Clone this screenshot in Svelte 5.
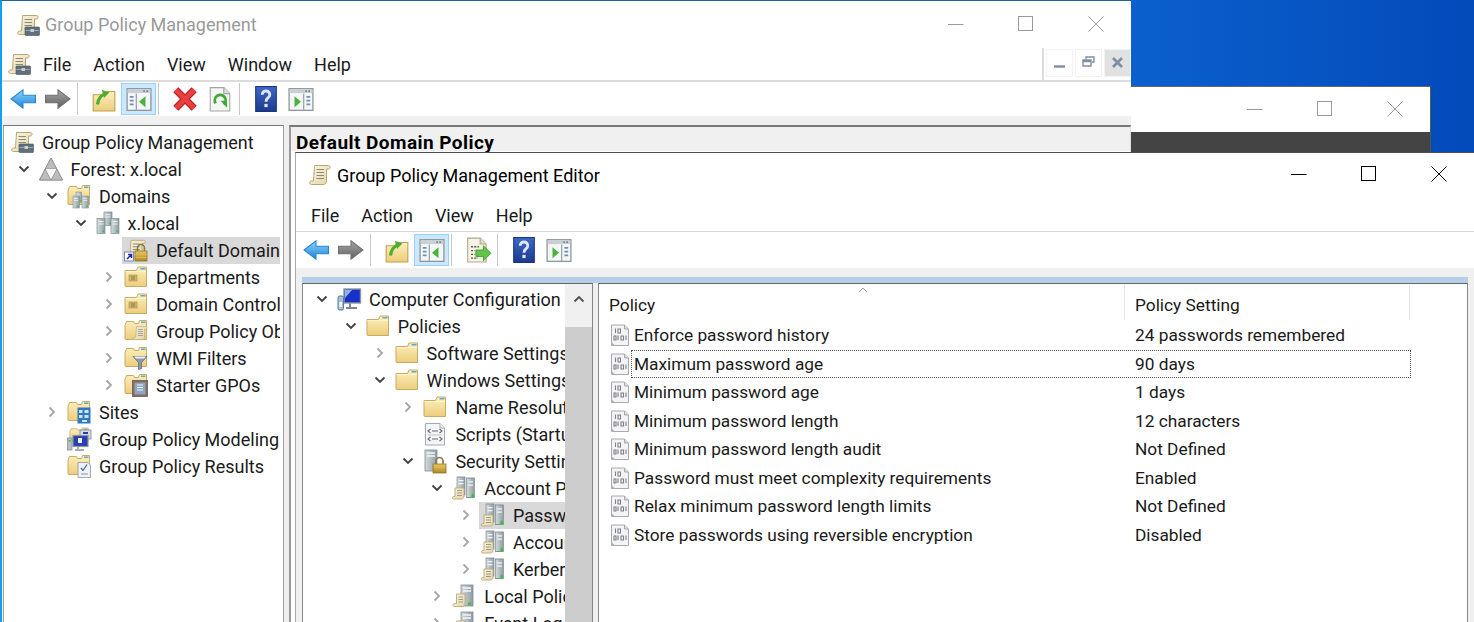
<script>
  const leftTree = [
    { t: 'Group Policy Management', d: 0, ic: 'toolscroll' },
    { t: 'Forest: x.local', d: 1, ic: 'forest', ch: 'open' },
    { t: 'Domains', d: 2, ic: 'domains', ch: 'open' },
    { t: 'x.local', d: 3, ic: 'domain', ch: 'open' },
    { t: 'Default Domain Policy', d: 4, ic: 'gpolink', sel: true },
    { t: 'Departments', d: 4, ic: 'ou', ch: 'closed' },
    { t: 'Domain Controllers', d: 4, ic: 'ou', ch: 'closed' },
    { t: 'Group Policy Objects', d: 4, ic: 'gpofolder', ch: 'closed' },
    { t: 'WMI Filters', d: 4, ic: 'wmi', ch: 'closed' },
    { t: 'Starter GPOs', d: 4, ic: 'starter', ch: 'closed' },
    { t: 'Sites', d: 2, ic: 'sites', ch: 'closed' },
    { t: 'Group Policy Modeling', d: 2, ic: 'modeling' },
    { t: 'Group Policy Results', d: 2, ic: 'results' }
  ];
  const editorTree = [
    { t: 'Computer Configuration', d: 0, ic: 'computer', ch: 'open' },
    { t: 'Policies', d: 1, ic: 'folder', ch: 'open' },
    { t: 'Software Settings', d: 2, ic: 'folder', ch: 'closed' },
    { t: 'Windows Settings', d: 2, ic: 'folder', ch: 'open' },
    { t: 'Name Resolution Policy', d: 3, ic: 'folder', ch: 'closed' },
    { t: 'Scripts (Startup/Shutdown)', d: 3, ic: 'scripts' },
    { t: 'Security Settings', d: 3, ic: 'security', ch: 'open' },
    { t: 'Account Policies', d: 4, ic: 'polserver', ch: 'open' },
    { t: 'Password Policy', d: 5, ic: 'polserver', ch: 'closed', sel: true },
    { t: 'Account Lockout Policy', d: 5, ic: 'polserver', ch: 'closed' },
    { t: 'Kerberos Policy', d: 5, ic: 'polserver', ch: 'closed' },
    { t: 'Local Policies', d: 4, ic: 'polserver2', ch: 'closed' },
    { t: 'Event Log', d: 4, ic: 'polserver2', ch: 'closed' }
  ];
  const policies = [
    ['Enforce password history', '24 passwords remembered'],
    ['Maximum password age', '90 days'],
    ['Minimum password age', '1 days'],
    ['Minimum password length', '12 characters'],
    ['Minimum password length audit', 'Not Defined'],
    ['Password must meet complexity requirements', 'Enabled'],
    ['Relax minimum password length limits', 'Not Defined'],
    ['Store passwords using reversible encryption', 'Disabled']
  ];
</script>

{#snippet icon(name, cls = 'ic')}
  <svg class={cls} viewBox="0 0 24 24" aria-hidden="true"><use href={'#i-' + name} /></svg>
{/snippet}

{#snippet winctl()}
  <div class="ctl">
    <span class="cb"><svg viewBox="0 0 16 16"><path d="M0 8.5H15.5" /></svg></span>
    <span class="cb"><svg viewBox="0 0 16 16"><rect x="0.5" y="0.5" width="14" height="14" /></svg></span>
    <span class="cb"><svg viewBox="0 0 16 16"><path d="M0.5 0.5L15.5 15.5M15.5 0.5L0.5 15.5" /></svg></span>
  </div>
{/snippet}

{#snippet tree(rows, base, step)}
  {#each rows as r}
    <div class="row">
      <div class="item" class:sel={r.sel} style="margin-left:{base + step * r.d}px">
        {#if r.ch}
          <svg class="chev" viewBox="0 0 16 16">
            {#if r.ch === 'open'}<path class="open" d="M3.5 5.5L8 10L12.5 5.5" />{:else}<path d="M5.5 3.5L10 8L5.5 12.5" />{/if}
          </svg>
        {/if}
        {@render icon(r.ic)}
        <span class="lbl">{r.t}</span>
      </div>
    </div>
  {/each}
{/snippet}

<svg class="defs" aria-hidden="true">
  <defs>
    <linearGradient id="gFolder" x1="0" y1="0" x2="0" y2="1"><stop offset="0" stop-color="#fdf0bd" /><stop offset="1" stop-color="#eccd7c" /></linearGradient>
    <linearGradient id="gPaper" x1="0" y1="0" x2="1" y2="1"><stop offset="0" stop-color="#fbf6e2" /><stop offset="1" stop-color="#e3d5a8" /></linearGradient>
    <linearGradient id="gBlue" x1="0" y1="0" x2="0" y2="1"><stop offset="0" stop-color="#8fd8ff" /><stop offset="1" stop-color="#1d80d6" /></linearGradient>
    <linearGradient id="gGrey" x1="0" y1="0" x2="0" y2="1"><stop offset="0" stop-color="#a8a8a8" /><stop offset="1" stop-color="#5f5f5f" /></linearGradient>
    <linearGradient id="gHelp" x1="0" y1="0" x2="0" y2="1"><stop offset="0" stop-color="#3d68c8" /><stop offset="1" stop-color="#1c3a8c" /></linearGradient>
    <linearGradient id="gSrv" x1="0" y1="0" x2="1" y2="0"><stop offset="0" stop-color="#d5dbdd" /><stop offset="1" stop-color="#8e9ca3" /></linearGradient>
    <linearGradient id="gGold" x1="0" y1="0" x2="0" y2="1"><stop offset="0" stop-color="#e8c860" /><stop offset="1" stop-color="#b08a28" /></linearGradient>

    <g id="i-folderback">
      <path d="M1 6.5L2.5 2.5H9.5L10.5 4.5H14.5L15.5 1.5H22.5V20.5H2A1 1 0 0 1 1 19.5Z" fill="url(#gFolder)" stroke="#c9ab64" />
      <rect x="17" y="2.5" width="4.5" height="1.5" fill="#5aa8dc" />
    </g>
    <g id="i-folder">
      <path d="M1 5.5H12.5L14 2H22.5V21.5H2A1 1 0 0 1 1 20.5Z" fill="url(#gFolder)" stroke="#c9ab64" />
      <path d="M1.5 6.5H22" stroke="#fff6d0" />
      <rect x="16.5" y="3" width="5" height="1.5" fill="#5aa8dc" />
    </g>
    <g id="i-ou">
      <use href="#i-folder" />
      <rect x="5" y="10" width="8" height="6" fill="#cdb26a" stroke="#a78d45" stroke-width="0.6" />
      <path d="M7 12H11M7 14H11" stroke="#7f6f3a" stroke-width="0.8" />
    </g>
    <g id="i-scroll">
      <path d="M6.5 2.5H20.5C22.7 2.5 22.7 6 20.5 6H18.5V18C18.5 20.5 17 21.5 15.5 21.5H3.5C1 21.5 1 18 3.5 18H5.5Z" fill="url(#gPaper)" stroke="#b9a777" />
      <path d="M8.5 6.5H16M8.5 9.5H16M8.5 12.5H16M8.5 15.5H16" stroke="#8c8a78" stroke-width="1.1" />
    </g>
    <g id="i-toolscroll">
      <use href="#i-scroll" />
      <rect x="9" y="14" width="14.5" height="8.5" rx="0.8" fill="#5f6f7b" stroke="#46525c" stroke-width="0.6" />
      <path d="M9.5 17.5H23" stroke="#9aa6ae" /><rect x="14.5" y="16" width="3.5" height="3" fill="#c7ced2" />
    </g>
    <g id="i-forest">
      <path d="M12 1L23.5 23H0.5Z" fill="#e4e4e4" stroke="#9b9b9b" />
      <path d="M12 1L17.8 12H6.2ZM6.2 12L12 23L0.5 23ZM17.8 12L23.5 23H12Z" fill="#bcbcbc" stroke="#8b8b8b" stroke-width="0.8" />
      <path d="M6.8 12H17.2L12 22Z" fill="#f7f7f7" />
    </g>
    <g id="i-tower">
      <rect x="0" y="0" width="8" height="15" fill="url(#gSrv)" stroke="#7f8c92" stroke-width="0.7" />
      <path d="M1.5 3H6.5M1.5 5.5H6.5" stroke="#f2f4f5" />
      <rect x="5.3" y="12" width="1.7" height="1.7" fill="#37c337" />
    </g>
    <g id="i-domain">
      <use href="#i-tower" transform="translate(8 1) scale(1 .9)" />
      <use href="#i-tower" transform="translate(1 7.5)" />
      <use href="#i-tower" transform="translate(15 7.5)" />
    </g>
    <g id="i-domains">
      <use href="#i-folderback" />
      <use href="#i-tower" transform="translate(9 8) scale(.7)" />
      <use href="#i-tower" transform="translate(15 12) scale(.8)" />
      <use href="#i-tower" transform="translate(6 12) scale(.8)" />
    </g>
    <g id="i-gpolink">
      <use href="#i-scroll" transform="translate(1 0) scale(.92)" />
      <rect x="11" y="13" width="12" height="10" fill="url(#gGold)" stroke="#86691c" stroke-width="0.7" />
      <path d="M13.5 13V10A3.5 3.5 0 0 1 20.5 10V13" fill="none" stroke="#8c7a45" stroke-width="1.6" />
      <path d="M11.5 16.5H22.5M11.5 19.5H22.5" stroke="#d8b84f" />
      <rect x="0.5" y="14" width="9" height="9" fill="#fff" stroke="#6a6a9a" stroke-width="0.8" />
      <path d="M3 21L7 17M4 16.5H7.5V20" fill="none" stroke="#2a2aa8" stroke-width="1.6" />
    </g>
    <g id="i-gpofolder">
      <use href="#i-folderback" />
      <use href="#i-scroll" transform="translate(8 6) scale(.68)" />
    </g>
    <g id="i-wmi">
      <use href="#i-folderback" />
      <path d="M9 10.5H23L17.5 16.5V22.5L14.5 23.5V16.5Z" fill="#8b9ba8" stroke="#5d6d7a" stroke-width="0.8" />
      <path d="M10 10.5H22L20 12.5H12Z" fill="#eef2f4" />
    </g>
    <g id="i-starter">
      <use href="#i-folderback" />
      <rect x="8.5" y="7.5" width="15" height="16" fill="#8c6a5a" stroke="#6b5a55" stroke-width="0.8" />
      <rect x="10.5" y="9.5" width="11" height="12" fill="#8aa6c4" />
      <path d="M13 12H19M13 14.5H19M13 17H19" stroke="#f4f7fa" stroke-width="1.2" />
    </g>
    <g id="i-sites">
      <use href="#i-folderback" />
      <rect x="10.5" y="7.5" width="13" height="16" fill="#2e78c4" />
      <path d="M12 10H15.5V13H12ZM17.5 10H21.5V13H17.5ZM12 15H15.5V18H12ZM17.5 15H21.5V18H17.5Z" fill="#cfe3f5" />
      <rect x="15" y="20" width="5" height="2" fill="#cfe3f5" />
    </g>
    <g id="i-modeling">
      <use href="#i-folderback" transform="translate(2 0) scale(.85 .7)" />
      <rect x="13" y="3" width="11" height="9" fill="#d8dde2" stroke="#7a8690" stroke-width="0.8" />
      <path d="M16 6H21" stroke="#2640a8" stroke-width="2" />
      <rect x="6" y="8.5" width="15" height="11" fill="#2a40b0" stroke="#8a96a0" stroke-width="1.2" />
      <rect x="11" y="11" width="4" height="5" fill="#f0f0f0" />
      <rect x="0.5" y="11" width="4.5" height="12" fill="#b8c0c6" stroke="#7a8690" stroke-width="0.7" />
      <rect x="1.7" y="13" width="2" height="1.6" fill="#37c337" />
      <path d="M11 20V22M8 23H17" stroke="#8a96a0" stroke-width="1.5" />
    </g>
    <g id="i-results">
      <use href="#i-folderback" />
      <path d="M11 8.5H21L23.5 11V23.5H11Z" fill="#eef1f5" stroke="#8c96a0" stroke-width="0.8" />
      <path d="M14 14L16 16.5L20 10.5" fill="none" stroke="#3e6fa8" stroke-width="1.3" />
      <path d="M14 20H21" stroke="#8c96a0" />
    </g>
    <g id="i-computer">
      <rect x="7" y="2" width="16.5" height="14" fill="#1830c8" stroke="#8a96a0" stroke-width="1.4" />
      <path d="M8 3H15L8 11Z" fill="#8ab4f0" />
      <path d="M13 16.5V20M9 21H20" stroke="#7a8690" stroke-width="2" />
      <rect x="1" y="9" width="5.5" height="14" rx="1.5" fill="#a8c0d4" stroke="#4a7298" stroke-width="0.9" />
      <rect x="2.5" y="15" width="2.5" height="5" fill="#fff" />
    </g>
    <g id="i-scripts">
      <path d="M2.5 1.5H17L21.5 6V23H2.5Z" fill="#f4f5f7" stroke="#a8a8b0" />
      <path d="M17 1.5V6H21.5" fill="#fff" stroke="#a8a8b0" />
      <path d="M7.5 7L5 9L7.5 11M16.5 7L19 9L16.5 11M7.5 15L5 17L7.5 19M16.5 15L19 17L16.5 19M9 9H15M9 17H15" fill="none" stroke="#6a6a70" stroke-width="1.1" />
      <path d="M5 13H19" stroke="#c5c5ca" />
    </g>
    <g id="i-security">
      <rect x="2" y="1" width="12" height="21" fill="url(#gSrv)" stroke="#7f8c92" stroke-width="0.8" />
      <path d="M4 4H12M4 7H12" stroke="#f5f6f7" stroke-width="1.4" />
      <rect x="10" y="15" width="13" height="9" fill="url(#gGold)" stroke="#86691c" stroke-width="0.7" />
      <path d="M13 15V12A3.5 3.5 0 0 1 20 12V15" fill="none" stroke="#8c7a45" stroke-width="1.7" />
      <path d="M11 18.5H22" stroke="#d8b84f" />
    </g>
    <g id="i-polserver">
      <use href="#i-tower" transform="translate(5 1) scale(1 1.2)" />
      <use href="#i-tower" transform="translate(14.5 2) scale(1 1.3)" />
      <path d="M3 12H12V20C12 22 11 23 9.5 23H1.5C0 23 0 20.5 1.5 20.5H3Z" fill="url(#gPaper)" stroke="#b9a777" stroke-width="0.9" />
      <path d="M5 14.5H10M5 17H10M5 19.5H10" stroke="#9c9a88" />
      <rect x="19.5" y="19" width="2.5" height="2.5" fill="#37c337" />
    </g>
    <g id="i-polserver2">
      <rect x="9" y="1" width="12" height="21" fill="url(#gSrv)" stroke="#7f8c92" stroke-width="0.8" />
      <path d="M11 4H19M11 7H19" stroke="#f5f6f7" stroke-width="1.4" />
      <rect x="16" y="18.5" width="2.8" height="2.8" fill="#37c337" />
      <path d="M4.5 10H13V19C13 21.5 12 22.5 10.5 22.5H2.5C0.5 22.5 0.5 19.5 2.5 19.5H4.5Z" fill="url(#gPaper)" stroke="#b9a777" stroke-width="0.9" />
      <path d="M6.5 13H11M6.5 15.5H11M6.5 18H11" stroke="#9c9a88" />
    </g>

    <g id="i-back">
      <path d="M1 12L12 3.5V8.5H23.5V15.5H12V20.5Z" fill="url(#gBlue)" stroke="#2a86d0" />
    </g>
    <g id="i-forward">
      <path d="M23 12L12 3.5V8.5H0.5V15.5H12V20.5Z" fill="url(#gGrey)" stroke="#6f6f6f" />
    </g>
    <g id="i-up">
      <path d="M2 8H11L13 5H22V23H2Z" fill="url(#gFolder)" stroke="#c2a050" />
      <path d="M6 17C7 11 9 9 13 7" fill="none" stroke="#4fae2d" stroke-width="3" />
      <path d="M10 3.5L17 6L12 11Z" fill="#4fae2d" />
    </g>
    <g id="i-paneframe">
      <rect x="1" y="2.5" width="22" height="20" fill="#f4f6f7" stroke="#8c969c" stroke-width="1.2" />
      <rect x="1.5" y="3" width="21" height="3.5" fill="#c9d0d4" />
      <path d="M16 4.7H17.5M18.8 4.7H20.3" stroke="#5d666c" />
    </g>
    <g id="i-paneleft">
      <use href="#i-paneframe" />
      <rect x="9" y="7" width="1" height="15" fill="#8c969c" />
      <path d="M3.5 10H7M3.5 13.5H7M3.5 17H7" stroke="#6f8fb8" stroke-width="1.6" />
      <path d="M18 9.5V19.5L12 14.5Z" fill="#49b43c" />
    </g>
    <g id="i-paneright">
      <use href="#i-paneframe" />
      <rect x="14" y="7" width="1" height="15" fill="#8c969c" />
      <path d="M17 10H20.5M17 13.5H20.5M17 17H20.5" stroke="#6f8fb8" stroke-width="1.6" />
      <path d="M6 9.5V19.5L12 14.5Z" fill="#49b43c" />
    </g>
    <g id="i-x">
      <path d="M3.5 3.5L20.5 20.5M20.5 3.5L3.5 20.5" stroke="#b81818" stroke-width="6.5" />
      <path d="M3.5 3.5L20.5 20.5M20.5 3.5L3.5 20.5" stroke="#e84040" stroke-width="4.5" />
    </g>
    <g id="i-refresh">
      <path d="M3 1.5H15.5L21 7V23H3Z" fill="#f5f6f3" stroke="#a0a6a0" />
      <path d="M15.5 1.5V7H21" fill="#dfe3df" stroke="#a0a6a0" />
      <path d="M8 16A5 5 0 1 1 15.5 17" fill="none" stroke="#43a83a" stroke-width="2.6" />
      <path d="M12.5 13.5H18.5V20Z" fill="#43a83a" />
    </g>
    <g id="i-help">
      <rect x="2.5" y="0.5" width="19" height="23" fill="url(#gHelp)" stroke="#1a3480" />
      <path d="M8.5 8C8.5 3.5 15.5 3.5 15.5 8C15.5 11 12 10.5 12 14.5" fill="none" stroke="#dfe6f8" stroke-width="2.6" />
      <rect x="10.5" y="16.5" width="3" height="3" fill="#dfe6f8" />
    </g>
    <g id="i-export">
      <path d="M2.5 1H14L19.5 6.5V23H2.5Z" fill="#f7f3e4" stroke="#b0a88c" />
      <path d="M14 1V6.5H19.5" fill="#e4dcc0" stroke="#b0a88c" />
      <path d="M5.5 9H13M5.5 12.5H9M5.5 16H9M5.5 19.5H12" stroke="#5f5f58" stroke-dasharray="2 1" stroke-width="1.2" />
      <path d="M10 12H17V8L24 15L17 22V18H10Z" fill="#62c24a" stroke="#3f9a33" stroke-width="0.8" />
    </g>
    <g id="i-binary">
      <path d="M2.5 1H15.5L19.5 5V21.5H2.5Z" fill="#f4f4f6" stroke="#a8a8ae" />
      <path d="M15.5 1V5H19.5" fill="#dcdce0" stroke="#a8a8ae" />
      <path d="M6.5 4.5V9M9 5H11.5V9H9ZM5 12H7V16H5ZM9 11.5V16M12 12H14.5V16H12ZM17 11.5V16" fill="none" stroke="#7f8088" stroke-width="1.1" />
      <path d="M2.5 18L6 21.5H2.5Z" fill="#b0b0b6" />
    </g>
  </defs>
</svg>

<div class="desktop">
  <div class="win back">
    <div class="titlebar muted">{@render winctl()}</div>
    <div class="dark"></div>
  </div>

  <div class="win gpm">
    <div class="titlebar muted">
      {@render icon('toolscroll')}
      <span class="title">Group Policy Management</span>
      {@render winctl()}
    </div>
    <div class="menubar">
      <div class="menu">
        {@render icon('toolscroll')}
        <span>File</span><span>Action</span><span>View</span><span>Window</span><span>Help</span>
      </div>
      <div class="mdi">
        <span class="mb"><svg viewBox="0 0 14 14"><path d="M1 10.5H12" stroke-width="2.4" /></svg></span>
        <span class="mb"><svg viewBox="0 0 14 14"><path d="M4 3V1H12V6H10M1 4H9V10H1ZM1 5.5H9" stroke-width="1.4" fill="none" /></svg></span>
        <span class="mb on"><svg viewBox="0 0 14 14"><path d="M2 2L11 11M11 2L2 11" stroke-width="2.8" /></svg></span>
      </div>
    </div>
    <div class="toolbar">
      <span class="tb">{@render icon('back', 'ti')}</span>
      <span class="tb">{@render icon('forward', 'ti')}</span>
      <i class="sep"></i>
      <span class="tb">{@render icon('up', 'ti')}</span>
      <span class="tb active">{@render icon('paneleft', 'ti')}</span>
      <i class="sep"></i>
      <span class="tb">{@render icon('x', 'ti')}</span>
      <span class="tb">{@render icon('refresh', 'ti')}</span>
      <i class="sep"></i>
      <span class="tb">{@render icon('help', 'ti')}</span>
      <span class="tb">{@render icon('paneright', 'ti')}</span>
    </div>
    <div class="gpm-body">
      <div class="pane tree-l">{@render tree(leftTree, 4, 28.5)}</div>
      <div class="detail">
        <div class="detail-head">Default Domain Policy</div>
      </div>
    </div>
  </div>

  <div class="win editor">
    <div class="titlebar">
      {@render icon('scroll')}
      <span class="title">Group Policy Management Editor</span>
      {@render winctl()}
    </div>
    <div class="menubar ed-menu">
      <div class="menu"><span>File</span><span>Action</span><span>View</span><span>Help</span></div>
    </div>
    <div class="toolbar">
      <span class="tb">{@render icon('back', 'ti')}</span>
      <span class="tb">{@render icon('forward', 'ti')}</span>
      <i class="sep"></i>
      <span class="tb">{@render icon('up', 'ti')}</span>
      <span class="tb active">{@render icon('paneleft', 'ti')}</span>
      <i class="sep"></i>
      <span class="tb">{@render icon('export', 'ti')}</span>
      <i class="sep"></i>
      <span class="tb">{@render icon('help', 'ti')}</span>
      <span class="tb">{@render icon('paneright', 'ti')}</span>
    </div>
    <div class="ed-body">
      <div class="blue"></div>
      <div class="ed-panes">
        <div class="pane tree-e">
          <div class="tree-scroll">{@render tree(editorTree, 32, 28.8)}</div>
          <div class="sbar">
            <div class="sup"><svg viewBox="0 0 12 8"><path d="M1.5 6.5L6 2L10.5 6.5" /></svg></div>
            <div class="sthumb"></div>
          </div>
        </div>
        <div class="pane list">
          <div class="lhead">
            <div class="lh c1">Policy<svg class="sort" viewBox="0 0 10 6"><path d="M1 5L5 1L9 5" /></svg></div>
            <div class="lh c2">Policy Setting</div>
          </div>
          {#each policies as p, i}
            <div class="lrow">
              <svg class="bin" viewBox="0 0 22 22"><use href="#i-binary" /></svg>
              <div class="cells" class:focus={i === 1}>
                <span class="c-name">{p[0]}</span>
                <span class="c-val">{p[1]}</span>
              </div>
            </div>
          {/each}
        </div>
      </div>
    </div>
  </div>
</div>

<style>
  :global(body) { margin: 0; background: #0a55c4; }
  .defs { position: absolute; width: 0; height: 0; }
  .desktop {
    position: relative; width: 1474px; height: 622px; overflow: hidden;
    background: linear-gradient(90deg, #0b62d0 0%, #0b60cd 77%, #034abb 100%);
    font-family: Roboto, "Noto Sans", sans-serif; font-size: 18px; color: #1a1a1a;
  }
  .win { position: absolute; box-sizing: border-box; background: #fff; display: flex; flex-direction: column; }
  :global(svg.ic) { width: 24px; height: 24px; flex: none; display: block; overflow: visible; }
  :global(svg.ti) { width: 26px; height: 26px; flex: none; display: block; overflow: visible; }

  .titlebar { display: flex; align-items: center; flex: none; color: #000; }
  .titlebar.muted { color: #9a9a9a; }
  .title { margin-left: 5px; white-space: nowrap; }
  .ctl { margin: 0 0 2px auto; display: flex; }
  .cb { width: 70px; height: 40px; display: flex; align-items: center; justify-content: center; }
  .cb svg { width: 16px; height: 16px; fill: none; stroke: currentColor; stroke-width: 1; }

  .back { left: 1131px; top: 86px; width: 300px; height: 66px; border-top: 1px solid #666; border-right: 1px solid #555; }
  .back .titlebar { height: 45px; }
  .dark { flex: 1; background: #444; }

  .gpm { left: 0; top: 0; width: 1131px; height: 622px; border-top: 1px solid #1f62a6; border-left: 2px solid #12a0ee; }
  .gpm > .titlebar { height: 47px; padding-left: 14px; }
  .menubar { display: flex; height: 34px; flex: none; }
  .menu { display: flex; align-items: center; gap: 22px; flex: 1; }
  .gpm .menu { padding-left: 5px; border-bottom: 2px solid #dcdcdc; border-right: 2px solid #dcdcdc; box-sizing: border-box; }
  .gpm .menu :global(svg.ic) { margin-right: -10px; }
  .mdi { display: flex; gap: 2px; padding: 1px 0 3px 2px; border-bottom: 2px solid #dcdcdc; box-sizing: border-box; width: 87px; flex: none; }
  .mb { flex: 1; height: 28px; border: 1px solid #f2f2f2; box-sizing: border-box; display: flex; align-items: center; justify-content: center; }
  .mb.on { background: #e1e1e1; }
  .mb svg { width: 14px; height: 14px; stroke: #7e8fa3; fill: none; }

  .toolbar { display: flex; align-items: center; height: 34px; flex: none; padding-left: 3px; }
  .tb { width: 35px; height: 32px; box-sizing: border-box; display: flex; align-items: center; justify-content: center; border: 1px solid transparent; }
  .tb.active { background: #cce8ff; border-color: #99d1ff; }
  .sep { width: 1px; height: 32px; background: #c6c6c6; margin: 0 5px 0 2px; flex: none; }
  .sep + .tb { margin-left: 3px; }

  .gpm-body { flex: 1; display: flex; background: #f0f0f0; padding: 9px 0 0 1px; gap: 5px; min-height: 0; }
  .pane { background: #fff; box-sizing: border-box; border: 1px solid #a0a0a0; border-bottom: 0; overflow: hidden; }
  .tree-l { width: 281px; border-top-color: #777; padding: 2.5px 3px 0 0; }
  .row { height: 27px; display: flex; white-space: nowrap; }
  .item { flex: 1; min-width: 0; display: flex; align-items: center; padding-left: 2px; position: relative; }
  .item.sel { background: #d9d9d9; }
  .item :global(svg.ic) { margin-right: 8px; }
  .lbl { white-space: nowrap; overflow: hidden; }
  .chev { position: absolute; left: -21px; top: 5px; width: 16px; height: 16px; fill: none; stroke: #a6a6a6; stroke-width: 1.8; }
  .chev .open { stroke: #404040; }

  .detail { flex: 1; background: #fff; border-top: 2px solid #777; border-left: 2px solid #999; border-right: 1px solid #ddd; }
  .detail-head { height: 24px; line-height: 32px; background: #f0f0f0; padding-left: 5px; font-weight: 700; font-size: 19px; letter-spacing: 0.45px; color: #000; white-space: nowrap; }

  .editor { left: 295px; top: 152px; width: 1179px; height: 470px; border-top: 1px solid #505050; border-left: 1px solid #aaa; }
  .editor > .titlebar { height: 44px; padding-left: 12px; }
  .ed-menu { height: 35px; padding-top: 3px; border-bottom: 1px solid #d8d8d8; box-sizing: border-box; }
  .ed-menu .menu { padding-left: 15px; }
  .editor .toolbar { padding-left: 2px; height: 36px; }
  .ed-body { flex: 1; background: #f0f0f0; display: flex; flex-direction: column; padding-top: 9px; min-height: 0; }
  .blue { height: 6px; background: #b5cfe8; margin-left: 6px; margin-right: 6px; flex: none; }
  .ed-panes { flex: 1; display: flex; gap: 5px; padding: 0 6px 0 6px; min-height: 0; }
  .ed-panes .pane { border-top-color: #666; border-left-color: #888; border-right-color: #888; }
  .tree-e { width: 291px; display: flex; flex: none; }
  .tree-scroll { flex: 1; min-width: 0; overflow: hidden; padding-top: 1.5px; }
  .sbar { width: 27px; flex: none; display: flex; flex-direction: column; background: #f0f0f0; }
  .sup { height: 43px; display: flex; align-items: center; justify-content: center; padding-bottom: 14px; box-sizing: border-box; }
  .sup svg { width: 12px; height: 8px; fill: none; stroke: #505050; stroke-width: 1.8; }
  .sthumb { flex: 1; background: #cdcdcd; }

  .list { flex: 1; min-width: 0; font-size: 17.3px; }
  .lhead { display: flex; height: 37px; }
  .lh { height: 35px; margin-top: 1px; box-sizing: border-box; line-height: 40px; padding-left: 10px; border-right: 1px solid #e5e5e5; position: relative; flex: none; }
  .c1 { width: 526px; }
  .c2 { width: 285px; }
  .sort { position: absolute; left: 259px; top: 2px; width: 10px; height: 6px; fill: none; stroke: #a0a0a0; }
  .lrow { height: 28.5px; display: flex; align-items: center; padding-left: 10px; }
  .bin { width: 22px; height: 22px; flex: none; }
  .cells { display: flex; width: 780px; height: 100%; box-sizing: border-box; align-items: center; border: 1px dotted transparent; flex: none; }
  .cells.focus { border-color: #555; }
  .c-name { width: 493px; padding-left: 2px; box-sizing: border-box; white-space: nowrap; flex: none; }
  .c-val { white-space: nowrap; padding-left: 10px; }
</style>
